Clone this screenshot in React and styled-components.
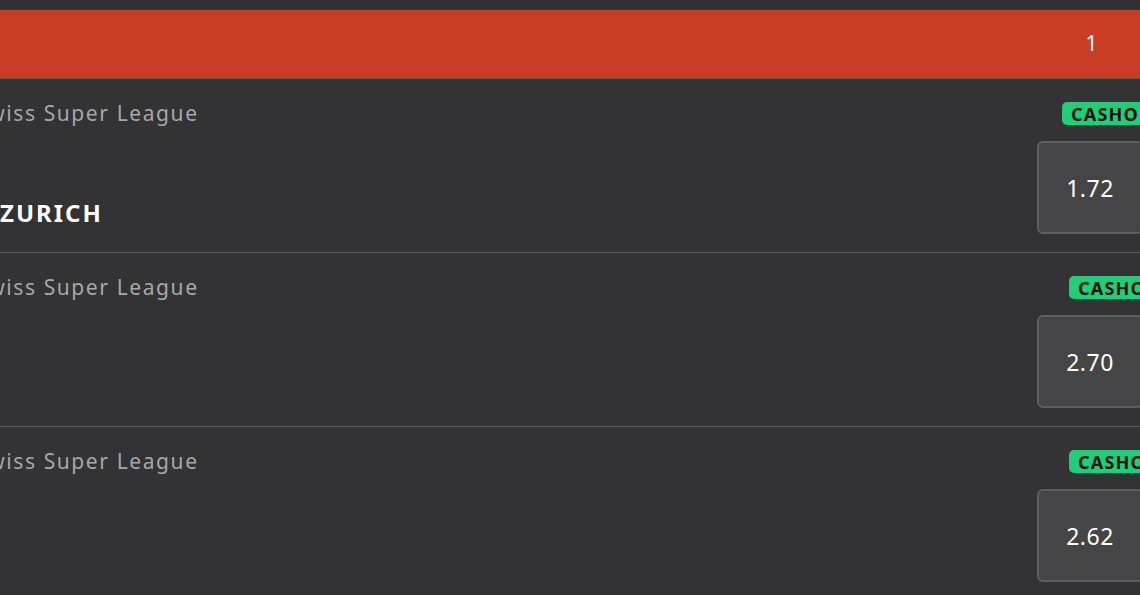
import React from 'react'
import styled, { createGlobalStyle } from 'styled-components';

const GlobalStyle = createGlobalStyle`
    html, body {
        margin: 0;
        padding: 0;
        background: #333235;
        overflow: hidden;
    }
    body {
        font-family: "Noto Sans", "Open Sans", sans-serif;
    }
`;

const matches = [
    { league: 'Swiss Super League', team: 'ZURICH', odd: '1.72', badgeShift: 25 },
    { league: 'Swiss Super League', team: '', odd: '2.70', badgeShift: 32 },
    { league: 'Swiss Super League', team: '', odd: '2.62', badgeShift: 32 },
];

function App() {
    return (
        <PageStyled>
            <GlobalStyle />
            <div className="top-strip" />
            <Header>
                <div />
                <div className="col">1</div>
            </Header>
            {matches.map((m, i) => (
                <Row key={i}>
                    <div className="info">
                        <p className="league">{m.league}</p>
                        {m.team && <h3 className="team">{m.team}</h3>}
                    </div>
                    <div className="market">
                        <Badge $shift={m.badgeShift}>CASHOUT</Badge>
                        <OddButton>{m.odd}</OddButton>
                    </div>
                </Row>
            ))}
        </PageStyled>
    )
}

const PageStyled = styled.div`
    width: 1140px;
    height: 595px;
    overflow: hidden;
    .top-strip{
        height: 10px;
        background: #323133;
    }
`;

const Header = styled.div`
    display: grid;
    grid-template-columns: 1fr 106px;
    margin-right: -3px;
    height: 68px;
    background: #c83c26;
    color: #fff;
    .col{
        display: flex;
        align-items: center;
        justify-content: center;
        font-size: 21px;
        padding-left: 3px;
        padding-bottom: 2px;
    }
`;

const Row = styled.div`
    display: grid;
    grid-template-columns: 1fr 106px;
    margin-left: -25px;
    margin-right: -3px;
    height: 174px;
    box-sizing: border-box;
    border-top: 1px solid #5a595b;
    &:nth-of-type(2){
        border-top: none;
        height: 175px;
        padding-top: 1px;
    }
    .info{
        padding-top: 20px;
    }
    .league{
        margin: 0;
        font-size: 21px;
        color: #a8a7aa;
        letter-spacing: 1.6px;
    }
    .team{
        margin: 69px 0 0 25px;
        font-size: 24px;
        font-weight: 700;
        color: #fff;
        letter-spacing: 2px;
    }
    .market{
        padding-top: 23px;
        display: flex;
        flex-direction: column;
        align-items: flex-start;
        gap: 16px;
    }
`;

const Badge = styled.span`
    margin-left: ${p => p.$shift}px;
    height: 23px;
    display: flex;
    align-items: center;
    padding: 0 9px;
    border-radius: 5px;
    background: #20cd78;
    color: #111;
    font-size: 18px;
    font-weight: 700;
    letter-spacing: 1.2px;
    white-space: nowrap;
`;

const OddButton = styled.button`
    width: 106px;
    height: 93px;
    box-sizing: border-box;
    background: #454446;
    border: 2px solid #5e5d60;
    border-radius: 6px;
    color: #fff;
    font-family: inherit;
    font-size: 23px;
    letter-spacing: 0.5px;
`;

export default App;
